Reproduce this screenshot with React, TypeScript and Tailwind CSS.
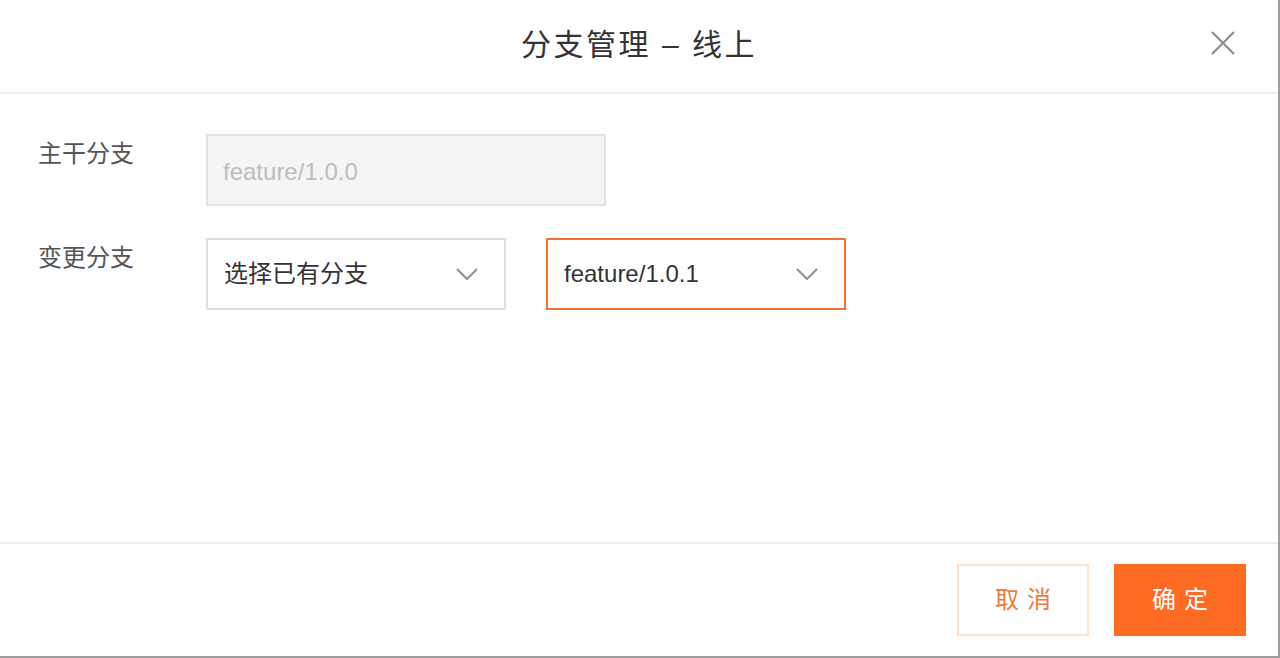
import { useState } from 'react';

const font = { fontFamily: '"Liberation Sans", "Noto Sans CJK SC", sans-serif' };

function Chevron() {
  return (
    <svg width="22" height="12" viewBox="0 0 22 12" fill="none">
      <path d="M1 1 L11 11 L21 1" stroke="#8f8f8f" strokeWidth="2" />
    </svg>
  );
}

function Select({ value, active }: { value: string; active?: boolean }) {
  return (
    <div
      className={`w-[300px] h-[72px] flex items-center justify-between pl-[16px] pr-[26px] border-2 bg-white ${
        active ? 'border-[#ef7232]' : 'border-[#dedede]'
      }`}
    >
      <span className="text-[24px] text-[#333333]">{value}</span>
      <Chevron />
    </div>
  );
}

export default function App() {
  const [branch] = useState('feature/1.0.1');

  return (
    <div
      className="w-[1280px] h-[658px] flex flex-col bg-white border-r-2 border-b-2 border-[#9b9b9b]"
      style={font}
    >
      <header className="h-[94px] shrink-0 grid grid-cols-[1fr_auto_1fr] items-center border-b-2 border-[#eeeeee]">
        <div />
        <h1 className="text-[30px] tracking-[2.5px] text-[#333333] pb-[4px]">分支管理 – 线上</h1>
        <div className="justify-self-end pr-[43px] pb-[6px]">
          <svg width="24" height="24" viewBox="0 0 24 24" fill="none">
            <path d="M1 1 L23 23 M23 1 L1 23" stroke="#8a8a8a" strokeWidth="2" />
          </svg>
        </div>
      </header>

      <main className="flex-1 pl-[38px] pt-[40px] flex flex-col gap-[32px]">
        <div className="flex">
          <label className="w-[168px] pt-[2px] text-[24px] text-[#555555]">主干分支</label>
          <div className="w-[400px] h-[72px] flex items-center pl-[15px] pt-[3px] bg-[#f5f5f5] border-2 border-[#e3e3e3] text-[24px] text-[#bdbdbd]">
            feature/1.0.0
          </div>
        </div>
        <div className="flex">
          <label className="w-[168px] pt-[2px] text-[24px] text-[#555555]">变更分支</label>
          <div className="flex gap-[40px]">
            <Select value="选择已有分支" />
            <Select value={branch} active />
          </div>
        </div>
      </main>

      <footer className="h-[114px] shrink-0 border-t-2 border-[#eeeeee] flex items-center justify-end gap-[25px] pr-[32px]">
        <button className="w-[132px] h-[72px] border-2 border-[#fde4d3] bg-white text-[24px] text-[#f07a3c] tracking-[8px] pl-[8px]">
          取消
        </button>
        <button className="w-[132px] h-[72px] bg-[#fd6c22] text-[24px] text-white tracking-[8px] pl-[8px]">
          确定
        </button>
      </footer>
    </div>
  );
}
